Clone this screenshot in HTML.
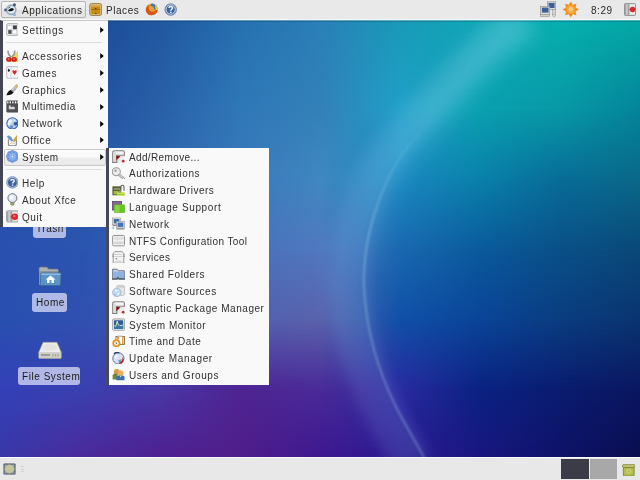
<!DOCTYPE html>
<html><head><meta charset="utf-8">
<style>
*{margin:0;padding:0;box-sizing:border-box}
html,body{-webkit-font-smoothing:antialiased;width:640px;height:480px;overflow:hidden;font-family:"Liberation Sans",sans-serif;font-size:10px;letter-spacing:0.55px;color:#1a1a1a;position:relative}
#desk{position:absolute;left:0;top:20px;width:640px;height:437px;overflow:hidden;background:#2a5aa8}
#top{position:absolute;left:0;top:0;width:640px;height:20px;background:#e9e9e9;border-bottom:1px solid #f4fafc}
#bot{position:absolute;left:0;top:456.5px;width:640px;height:23.5px;background:#e8e8e8;border-top:1.5px solid #fafafa}
.t{will-change:transform;position:absolute;white-space:nowrap;line-height:11px}
.menu{position:absolute;background:#f9f9f9;border-left:3px solid #434553}
.mt{will-change:transform;position:absolute;white-space:nowrap;line-height:11px;color:#303030}
.arr,.ic{position:absolute}
.lbl{position:absolute;background:rgba(200,205,240,0.85);border-radius:3px;white-space:nowrap;line-height:11px}
</style></head><body>
<div id="desk"><div style="position:absolute;left:0;top:0;width:640px;height:437px;background:linear-gradient(to right,#1a4a98 0px,#1c4c98 80px,#2058a0 160px,#2670b0 240px,#2a80b8 320px,#1a9ab8 400px,#10a8b8 480px,#06b0ae 560px,#04a8a5 640px);"></div><div style="position:absolute;left:0;top:0;width:640px;height:437px;background:linear-gradient(to right,#1e4ca0 0px,#2050a0 80px,#2a60a8 160px,#3078b8 240px,#3380b8 320px,#20a0c8 400px,#0aa0b0 480px,#0898a6 560px,#04849a 640px);-webkit-mask-image:linear-gradient(to bottom,transparent 0px,#000 90px);mask-image:linear-gradient(to bottom,transparent 0px,#000 90px);"></div><div style="position:absolute;left:0;top:0;width:640px;height:437px;background:linear-gradient(to right,#2450a8 0px,#2858a8 80px,#3068b0 160px,#3a78bc 240px,#4088c0 320px,#1a88c0 400px,#0a80aa 480px,#086c98 560px,#0a6888 640px);-webkit-mask-image:linear-gradient(to bottom,transparent 90px,#000 160px);mask-image:linear-gradient(to bottom,transparent 90px,#000 160px);"></div><div style="position:absolute;left:0;top:0;width:640px;height:437px;background:linear-gradient(to right,#2a50b0 0px,#2a54b0 80px,#3660b0 160px,#4870b8 240px,#5078c0 320px,#1a68b0 400px,#0a5a9c 480px,#0a5088 560px,#0a4878 640px);-webkit-mask-image:linear-gradient(to bottom,transparent 160px,#000 230px);mask-image:linear-gradient(to bottom,transparent 160px,#000 230px);"></div><div style="position:absolute;left:0;top:0;width:640px;height:437px;background:linear-gradient(to right,#2850b0 0px,#3050b0 80px,#4058b0 160px,#5060b0 240px,#5a62ac 320px,#1050a8 400px,#0a4498 480px,#0a3c80 560px,#0a3470 640px);-webkit-mask-image:linear-gradient(to bottom,transparent 230px,#000 300px);mask-image:linear-gradient(to bottom,transparent 230px,#000 300px);"></div><div style="position:absolute;left:0;top:0;width:640px;height:437px;background:linear-gradient(to right,#3440b8 0px,#3a40b0 80px,#4838a6 160px,#4e2492 240px,#4a2a98 320px,#2a2aa0 400px,#0a2282 480px,#0a1c70 560px,#0a1660 640px);-webkit-mask-image:linear-gradient(to bottom,transparent 300px,#000 370px);mask-image:linear-gradient(to bottom,transparent 300px,#000 370px);"></div><div style="position:absolute;left:0;top:0;width:640px;height:437px;background:linear-gradient(to right,#3838a8 0px,#4a2a9c 80px,#4e2090 160px,#501e8a 240px,#3e1890 320px,#2a1a90 400px,#1a1680 480px,#0e1268 560px,#0a0e50 640px);-webkit-mask-image:linear-gradient(to bottom,transparent 370px,#000 437px);mask-image:linear-gradient(to bottom,transparent 370px,#000 437px);"></div><svg width="640" height="437" style="position:absolute;left:0;top:0"><defs><filter id="g1" x="-50%" y="-50%" width="200%" height="200%"><feGaussianBlur stdDeviation="7"/></filter><filter id="g2" x="-50%" y="-50%" width="200%" height="200%"><feGaussianBlur stdDeviation="1"/></filter><linearGradient id="lg2" gradientUnits="userSpaceOnUse" x1="0" y1="0" x2="0" y2="260"><stop offset="0" stop-color="#a8f0ff" stop-opacity="0.9"/><stop offset="1" stop-color="#a8f0ff" stop-opacity="0"/></linearGradient><linearGradient id="lg" gradientUnits="userSpaceOnUse" x1="0" y1="90" x2="0" y2="210"><stop offset="0" stop-color="#c0e8ff" stop-opacity="0"/><stop offset="1" stop-color="#c0e8ff" stop-opacity="1"/></linearGradient></defs><path d="M530 0 C480 40 440 90 405 130 C380 165 362 220 364 267 C366 310 378 350 395 385 C405 405 415 420 428 445" stroke="url(#lg2)" stroke-opacity="0.16" stroke-width="40" fill="none" filter="url(#g1)"/><path d="M512 0 C462 40 422 90 387 130 C362 165 344 220 346 267 C348 310 360 350 377 385 C387 405 397 420 410 445" stroke="#b0d8ff" stroke-opacity="0.13" stroke-width="34" fill="none" filter="url(#g1)"/><path d="M530 0 C480 40 440 90 405 130 C380 165 362 220 364 267 C366 310 378 350 395 385 C405 405 415 420 428 445" stroke="#a0d0ff" stroke-opacity="0.10" stroke-width="10" fill="none" filter="url(#g1)"/><path d="M530 0 C480 40 440 90 405 130 C380 165 362 220 364 267 C366 310 378 350 395 385 C405 405 415 420 428 445" stroke="url(#lg)" stroke-opacity="0.28" stroke-width="2.2" fill="none" filter="url(#g2)"/></svg><div style="position:absolute;left:0;top:0;width:640px;height:1px;background:rgba(150,190,205,0.55)"></div><div style="position:absolute;left:0;top:1px;width:640px;height:1px;background:rgba(20,40,60,0.22)"></div></div>
<div class="lbl" style="left:33px;top:219px;width:33px;height:18.5px"></div>
<div class="t" style="left:36px;top:223px">Trash</div>
<svg class="ic" style="left:37.5px;top:265.5px" width="24" height="21" viewBox="0 0 24 21">
  <path d="M1 2.5 C1 1.6 1.6 1 2.5 1 L9 1 L10.5 3 L19 3 C19.8 3 20.5 3.6 20.5 4.5 L20.5 7 L1 7 Z" fill="#a8b0b8" stroke="#6a7078" stroke-width="0.8"/>
  <rect x="1" y="5" width="19" height="14" fill="#8a929a"/>
  <path d="M3 7 L23 7 L22.3 19.5 L2.3 19.5 Z" fill="#5c94c8" stroke="#3f6a98" stroke-width="0.8"/>
  <path d="M3.3 7.5 L22.5 7.5 L22.4 9 L3.2 9 Z" fill="#8cbce6"/>
  <path d="M12.5 9.5 L17.5 13.5 L16 13.5 L16 17 L9 17 L9 13.5 L7.5 13.5 Z" fill="#ffffff"/>
  <rect x="11.5" y="14" width="2" height="3" fill="#5c94c8"/>
</svg>
<div class="lbl" style="left:32px;top:293px;width:35px;height:18.5px"></div>
<div class="t" style="left:36px;top:297px">Home</div>
<svg class="ic" style="left:37.5px;top:340.5px" width="24" height="18.5" viewBox="0 0 24 18">
  <path d="M5 1 L19 1 L23.3 11 L23.3 16 C23.3 16.8 22.8 17.3 22 17.3 L2 17.3 C1.2 17.3 0.7 16.8 0.7 16 L0.7 11 Z" fill="#d8d8d0" stroke="#8a8a84" stroke-width="0.8"/>
  <path d="M5.5 1.6 L18.5 1.6 L22.6 10.8 L1.4 10.8 Z" fill="#ececea"/>
  <ellipse cx="12" cy="6" rx="7" ry="3.6" fill="#e2e2de"/>
  <rect x="0.9" y="11" width="22.2" height="6" fill="#cfcfc8"/>
  <rect x="3" y="12.8" width="9" height="1.8" fill="#9a9a94"/>
  <rect x="14.5" y="12.5" width="1.2" height="3" fill="#a8a8a2"/><rect x="17" y="12.5" width="1.2" height="3" fill="#a8a8a2"/><rect x="19.5" y="12.5" width="1.2" height="3" fill="#a8a8a2"/>
</svg>
<div class="lbl" style="left:18px;top:366.5px;width:62px;height:18.5px"></div>
<div class="t" style="left:21.5px;top:371px">File System</div>
<div id="top">
  <div style="position:absolute;left:1px;top:1.3px;width:84.6px;height:17px;border:1px solid #b4b4b4;border-radius:2px;background:linear-gradient(#f6f6f6 0%,#ececec 50%,#e0e0e0 51%,#e6e6e6 100%)"></div>
  <svg class="ic" style="left:3.8px;top:2.8px" width="13.6" height="13.6" viewBox="0 0 16 16">
    <circle cx="8.5" cy="8" r="5.4" fill="#e4ecf4" stroke="#98aec6" stroke-width="2"/>
    <circle cx="1.8" cy="8.2" r="1.7" fill="#4a6282"/><circle cx="12.3" cy="2.2" r="1.8" fill="#3e5878"/><circle cx="12.3" cy="13.8" r="1.8" fill="#9ab4d0"/>
    <path d="M4.8 9.2 C6.5 10.3 9.5 10 11.6 7.8 C11.4 6.2 9.2 5.8 7.2 6.8 L5.6 8 Z" fill="#0c0c0c"/>
    <path d="M5 6 L7.5 4.5" stroke="#2a3a50" stroke-width="1"/>
  </svg>
  <div class="t" style="left:22px;top:5px;color:#2a2a2a">Applications</div>
  <svg class="ic" style="left:89px;top:2.8px" width="13.4" height="13" viewBox="0 0 16 16">
    <rect x="0.7" y="0.7" width="14.6" height="14.6" rx="2.2" fill="#dcc47a" stroke="#8a7848" stroke-width="1.1"/>
    <rect x="2.4" y="3" width="11.2" height="10.6" fill="#c98c18"/>
    <rect x="2.4" y="3" width="11.2" height="1.4" fill="#e0b050"/>
    <rect x="2.4" y="7.6" width="11.2" height="1.1" fill="#a06a10"/>
    <rect x="7" y="6.2" width="2" height="1.4" fill="#5a3a08"/><rect x="7" y="12.2" width="2" height="1.2" fill="#5a3a08"/>
  </svg>
  <div class="t" style="left:105.5px;top:5px;color:#2a2a2a">Places</div>
  <svg class="ic" style="left:144.5px;top:2.8px" width="13.4" height="12.8" viewBox="0 0 16 16">
    <circle cx="8" cy="8" r="7.4" fill="#e8a030"/>
    <path d="M8 0.6 A7.4 7.4 0 0 1 15.4 8 L11 8 C11 5 9 3.5 6 4 Z" fill="#3a78b8"/>
    <path d="M15.4 8 A7.4 7.4 0 0 1 8 15.4 C4 15.4 0.6 12 0.6 8 C1 5 3 3 5 2.6 C3.5 5 4 8 6 10 C8 11.5 11 11 12.5 9 Z" fill="#d8561a"/>
    <path d="M12 2.5 C14.5 4 15.5 6.5 15.2 9 L13 8.5 Z" fill="#f0d050"/>
  </svg>
  <svg class="ic" style="left:163.5px;top:2.8px" width="13.4" height="13" viewBox="0 0 16 16">
    <circle cx="8" cy="8" r="7.2" fill="#7493c0" stroke="#5a78a8" stroke-width="0.8"/>
    <circle cx="8" cy="8" r="5.6" fill="#3c64a2" stroke="#dfe7f2" stroke-width="0.9"/>
    <path d="M5.9 6 C5.9 3.8 10.3 3.6 10.3 6 C10.3 7.6 8.2 7.8 8.2 9.5" stroke="#f2f6fb" stroke-width="1.8" fill="none"/>
    <rect x="7.3" y="10.6" width="1.8" height="1.7" fill="#f2f6fb"/>
  </svg>
  <svg class="ic" style="left:539.5px;top:1px" width="16.5" height="16.5" viewBox="0 0 20 20">
    <rect x="9" y="1" width="10" height="9" fill="#e8e8e8" stroke="#8a8a8a" stroke-width="0.8"/>
    <rect x="10.3" y="2.3" width="7.4" height="6.2" fill="#3e5e98"/>
    <rect x="15" y="10.5" width="4" height="7" fill="#d8d8d8" stroke="#8a8a8a" stroke-width="0.6"/>
    <circle cx="17" cy="17.5" r="1.6" fill="#e8e8e8" stroke="#8a8a8a" stroke-width="0.6"/>
    <rect x="0.8" y="6.5" width="11" height="9.5" fill="#e8e8e8" stroke="#8a8a8a" stroke-width="0.8"/>
    <rect x="2.2" y="7.9" width="8.2" height="6.2" fill="#3e5e98"/>
    <rect x="0.8" y="16.5" width="11" height="2.5" fill="#d0d0d0" stroke="#8a8a8a" stroke-width="0.6"/>
  </svg>
  <svg class="ic" style="left:561.5px;top:1.2px" width="17.5" height="17" viewBox="0 0 20 20">
    <path d="M10 0.5 L12.3 4.4 L16.7 3.3 L15.6 7.7 L19.5 10 L15.6 12.3 L16.7 16.7 L12.3 15.6 L10 19.5 L7.7 15.6 L3.3 16.7 L4.4 12.3 L0.5 10 L4.4 7.7 L3.3 3.3 L7.7 4.4 Z" fill="#f08c1c"/>
    <circle cx="10" cy="10" r="5.2" fill="#f7a83a"/>
    <circle cx="10" cy="9.6" r="2.6" fill="#ffd08a"/>
  </svg>
  <div class="t" style="left:591px;top:5px;color:#2a2a2a">8:29</div>
  <svg class="ic" style="left:623.8px;top:3px" width="12" height="13" viewBox="0 0 15 16">
    <rect x="0.6" y="0.6" width="13.8" height="14.8" rx="1" fill="#e8e8e8" stroke="#7a7a7a" stroke-width="1"/>
    <rect x="1.2" y="1.2" width="5.6" height="13.6" fill="#a0a0a0"/>
    <rect x="2.4" y="1.2" width="2.4" height="13.6" fill="#c8c8c8"/>
    <circle cx="10.8" cy="8" r="3.4" fill="#e0242a"/>
    <path d="M6.5 8 L10 5 L10 11 Z" fill="#e0242a"/>
  </svg>
</div>
<div id="bot">
  <svg class="ic" style="left:3px;top:5.8px" width="13" height="12" viewBox="0 0 16 15">
    <rect x="0.5" y="0.5" width="15" height="14" rx="1.2" fill="#3e4c62"/>
    <path d="M1.5 1.5 L5 1.5 L1.5 5 Z M14.5 1.5 L11 1.5 L14.5 5 Z M1.5 13.5 L5 13.5 L1.5 10 Z M14.5 13.5 L11 13.5 L14.5 10 Z" fill="#8a9cb8"/>
    <ellipse cx="8" cy="7.5" rx="6.6" ry="6" fill="#b4b48c"/>
    <ellipse cx="8" cy="7.3" rx="5.4" ry="4.8" fill="#c4c4a0"/>
  </svg>
  <div style="position:absolute;left:21px;top:8.2px;width:2.8px;height:1px;background:#d0d0d0"></div>
  <div style="position:absolute;left:21px;top:11px;width:2.8px;height:1px;background:#d0d0d0"></div>
  <div style="position:absolute;left:21px;top:13.5px;width:2.8px;height:1px;background:#d0d0d0"></div>
  <div style="position:absolute;left:561.3px;top:1.4px;width:27.4px;height:20.4px;background:#3c3c48"></div>
  <div style="position:absolute;left:590px;top:1.4px;width:26.8px;height:20.4px;background:#a8a8a8"></div>
  <svg class="ic" style="left:621.5px;top:6px" width="13.5" height="12.5" viewBox="0 0 16 15">
    <rect x="1.5" y="3.5" width="13" height="11" rx="1.2" fill="#b4bc4c" stroke="#707a28" stroke-width="0.9"/>
    <rect x="0.6" y="0.8" width="14.8" height="3.2" rx="1" fill="#c8cc80" stroke="#707a28" stroke-width="0.9"/>
    <circle cx="8" cy="9" r="2.4" fill="none" stroke="#d8e090" stroke-width="1"/>
  </svg>
</div>
<div class="menu" style="left:0px;top:20px;width:107.5px;height:206.6px;border-top:1px solid #c8c8c8">
  <div style="position:absolute;left:2.5px;top:21px;width:96px;height:1px;background:#dedede"></div>
  <div style="position:absolute;left:1px;top:128px;width:101.5px;height:16.5px;border:1px solid #c8c8c8;border-radius:2px;background:linear-gradient(#fdfdfd 0%,#f9f9f9 47%,#ededed 53%,#e9e9e9 100%)"></div>
  <div style="position:absolute;left:2.5px;top:148px;width:96px;height:1px;background:#dedede"></div>
</div>
<div class="menu" style="left:106px;top:147.5px;width:163px;height:237.6px;border-left:3.5px solid #474957"></div>
<div class="mt" style="left:21.6px;top:24.7px;letter-spacing:0.72px;">Settings</div>
<svg class="arr" style="left:99.5px;top:27.0px" width="4" height="6" viewBox="0 0 4 6"><path d="M0.2 0L3.8 3L0.2 6z" fill="#000"/></svg>
<svg class="ic" style="left:5.5px;top:23.2px" width="12.8" height="12.8" viewBox="0 0 16 16">
<rect x="0.8" y="0.8" width="14.6" height="14.6" rx="2.2" fill="#f6f6f6" stroke="#b9b9b9" stroke-width="1.4"/>
<rect x="2.2" y="3" width="5.4" height="5" fill="#fff" stroke="#bdbdbd" stroke-width="0.8"/>
<rect x="8.8" y="3" width="4.8" height="5" fill="#3d4444"/>
<rect x="2.8" y="8.8" width="4.2" height="4.8" fill="#46544e"/>
<rect x="8.4" y="8.6" width="5.2" height="5" fill="#fff" stroke="#bdbdbd" stroke-width="0.8"/>
</svg>
<div class="mt" style="left:21.6px;top:51.0px;">Accessories</div>
<svg class="arr" style="left:99.5px;top:53.3px" width="4" height="6" viewBox="0 0 4 6"><path d="M0.2 0L3.8 3L0.2 6z" fill="#000"/></svg>
<svg class="ic" style="left:5.5px;top:49.5px" width="12.8" height="12.8" viewBox="0 0 16 16">
<path d="M15.4 0.8 L15.9 15.9 L3.4 15.9 Z" fill="#f2d660" stroke="#d4b040" stroke-width="0.5"/>
<path d="M3 0.8 C2 3 3 6 6.5 9 M10.5 0.8 C11.5 3 10.5 6 7 9" stroke="#9c9c9c" stroke-width="2.2" fill="none"/>
<ellipse cx="3.6" cy="11.8" rx="3.4" ry="2.9" fill="#cc2218"/>
<ellipse cx="10.2" cy="11.8" rx="3.4" ry="2.9" fill="#cc2218"/>
<ellipse cx="3.4" cy="11.4" rx="1.3" ry="1" fill="#f47a60"/>
<ellipse cx="10.2" cy="11.4" rx="1.3" ry="1" fill="#f47a60"/>
</svg>
<div class="mt" style="left:21.6px;top:67.8px;">Games</div>
<svg class="arr" style="left:99.5px;top:70.1px" width="4" height="6" viewBox="0 0 4 6"><path d="M0.2 0L3.8 3L0.2 6z" fill="#000"/></svg>
<svg class="ic" style="left:5.5px;top:66.3px" width="12.8" height="12.8" viewBox="0 0 16 16">
<rect x="0.8" y="0.8" width="14.6" height="14.6" rx="2" fill="#f8f8f8" stroke="#c2c2c2" stroke-width="1.3"/>
<rect x="5.8" y="1.4" width="0.9" height="13.5" fill="#c8c8c8"/>
<path d="M3.5 3 L5 5.5 L3.5 7.5 L2 5.5 Z" fill="#111"/>
<path d="M8 6.5 C8 5 10 5 10.7 6.2 C11.4 5 13.4 5 13.4 6.5 C13.4 8.5 11 10 10.7 11.5 C10.4 10 8 8.5 8 6.5 Z" fill="#dd2424"/>
</svg>
<div class="mt" style="left:21.6px;top:84.6px;">Graphics</div>
<svg class="arr" style="left:99.5px;top:86.9px" width="4" height="6" viewBox="0 0 4 6"><path d="M0.2 0L3.8 3L0.2 6z" fill="#000"/></svg>
<svg class="ic" style="left:5.5px;top:83.1px" width="12.8" height="12.8" viewBox="0 0 16 16">
<path d="M0.6 15.2 C1.5 12 3.5 9.5 6.5 8.5 L9.5 11.5 C8 14 4.5 15.5 0.6 15.2 Z" fill="#111"/>
<path d="M6 8.5 L10.5 4.5 L13.2 7.2 L9.5 11.8 Z" fill="#b0b0b0"/>
<path d="M7.2 9 L11 5.6" stroke="#e8e8e8" stroke-width="0.8"/>
<path d="M10.3 4.3 L12.5 1.8 C13.5 1.2 15 2.5 15.4 3.6 L13.3 7.3 Z" fill="#d8ae78"/>
</svg>
<div class="mt" style="left:21.6px;top:101.4px;">Multimedia</div>
<svg class="arr" style="left:99.5px;top:103.7px" width="4" height="6" viewBox="0 0 4 6"><path d="M0.2 0L3.8 3L0.2 6z" fill="#000"/></svg>
<svg class="ic" style="left:5.5px;top:99.9px" width="12.8" height="12.8" viewBox="0 0 16 16">
<rect x="0.5" y="0.7" width="15.2" height="15" rx="1.5" fill="#454545"/>
<rect x="1.5" y="1.7" width="1.6" height="2.6" fill="#fff"/><rect x="4.6" y="1.7" width="1.6" height="2.6" fill="#fff"/><rect x="7.8" y="1.7" width="1.6" height="2.6" fill="#fff"/><rect x="11" y="1.7" width="1.6" height="2.6" fill="#fff"/><rect x="13.5" y="1.7" width="1.2" height="2.6" fill="#fff"/>
<rect x="1.2" y="5.2" width="13.8" height="9.6" fill="#505050"/>
<path d="M3.5 7 L6 7 L6 9 L9 8 L11 9 L11 11.5 L3.5 11.5 Z" fill="#d8d8d8"/>
</svg>
<div class="mt" style="left:21.6px;top:118.2px;">Network</div>
<svg class="arr" style="left:99.5px;top:120.5px" width="4" height="6" viewBox="0 0 4 6"><path d="M0.2 0L3.8 3L0.2 6z" fill="#000"/></svg>
<svg class="ic" style="left:5.5px;top:116.7px" width="12.8" height="12.8" viewBox="0 0 16 16">
<circle cx="8" cy="8" r="7" fill="#b8cde8" stroke="#3d68a8" stroke-width="1.3"/>
<path d="M3 5 C4 3 6 2.8 7 3.6 L8 6 L5.5 8.2 L4.5 11 L2 9 Z" fill="#eef4fb"/>
<path d="M9.5 2.5 L12 3.8 L10.5 6 L9 5.5 Z" fill="#dce8f6"/>
<path d="M10 7 L14 6 L14.8 9.5 L12 11 L9.5 9.5 Z" fill="#2d5a9a"/>
<path d="M5 10.5 L9 11 L8 14 L5.5 13.5 Z" fill="#5b86c0"/>
</svg>
<div class="mt" style="left:21.6px;top:135.0px;">Office</div>
<svg class="arr" style="left:99.5px;top:137.3px" width="4" height="6" viewBox="0 0 4 6"><path d="M0.2 0L3.8 3L0.2 6z" fill="#000"/></svg>
<svg class="ic" style="left:5.5px;top:133.5px" width="12.8" height="12.8" viewBox="0 0 16 16">
<path d="M3 6.5 L3 12.8 C3 14.3 4 14.9 5.5 14.9 L10.5 14.9 C12 14.9 13 14.3 13 12.8 L13 6.5" fill="#f6f6f6" stroke="#8a8a8a" stroke-width="1.4"/>
<path d="M1.2 3 C2.5 1.2 5 1.8 7 4.5 L9 8.5 L7.5 9.5 C5 7.5 2 5.5 1.2 3 Z" fill="#6f95c8"/>
<path d="M13.8 1 L13.6 7.5 L10 10 L8.2 8.6 Z" fill="#c9a348"/>
<path d="M5 12.2 L8 10.8 L11 12.2" stroke="#c8b890" stroke-width="1" fill="none"/>
</svg>
<div class="mt" style="left:21.6px;top:151.8px;">System</div>
<svg class="arr" style="left:99.5px;top:154.1px" width="4" height="6" viewBox="0 0 4 6"><path d="M0.2 0L3.8 3L0.2 6z" fill="#000"/></svg>
<svg class="ic" style="left:5.5px;top:150.3px" width="12.8" height="12.8" viewBox="0 0 16 16">
<circle cx="13.00" cy="8.00" r="2.6" fill="#7aa6e6" stroke="#4a7ac4" stroke-width="0.7"/><circle cx="11.54" cy="11.54" r="2.6" fill="#7aa6e6" stroke="#4a7ac4" stroke-width="0.7"/><circle cx="8.00" cy="13.00" r="2.6" fill="#7aa6e6" stroke="#4a7ac4" stroke-width="0.7"/><circle cx="4.46" cy="11.54" r="2.6" fill="#7aa6e6" stroke="#4a7ac4" stroke-width="0.7"/><circle cx="3.00" cy="8.00" r="2.6" fill="#7aa6e6" stroke="#4a7ac4" stroke-width="0.7"/><circle cx="4.46" cy="4.46" r="2.6" fill="#7aa6e6" stroke="#4a7ac4" stroke-width="0.7"/><circle cx="8.00" cy="3.00" r="2.6" fill="#7aa6e6" stroke="#4a7ac4" stroke-width="0.7"/><circle cx="11.54" cy="4.46" r="2.6" fill="#7aa6e6" stroke="#4a7ac4" stroke-width="0.7"/>
<circle cx="8" cy="8" r="4.6" fill="#7aa6e6"/>
<circle cx="8" cy="8" r="3" fill="none" stroke="#a8c8f4" stroke-width="0.8"/>
<circle cx="8" cy="8" r="1.1" fill="#e6f0ff"/>
</svg>
<div class="mt" style="left:21.6px;top:177.9px;">Help</div>
<svg class="ic" style="left:5.5px;top:176.4px" width="12.8" height="12.8" viewBox="0 0 16 16">
<circle cx="8" cy="8" r="7.3" fill="#a8bcd8" stroke="#6a88b8" stroke-width="0.8"/>
<circle cx="8" cy="8" r="5.6" fill="#3a62a2"/>
<path d="M5.9 6 C5.9 3.8 10.3 3.6 10.3 6 C10.3 7.6 8.2 7.8 8.2 9.5" stroke="#eef3fa" stroke-width="1.8" fill="none"/>
<rect x="7.3" y="10.6" width="1.8" height="1.7" fill="#eef3fa"/>
</svg>
<div class="mt" style="left:21.6px;top:194.7px;">About Xfce</div>
<svg class="ic" style="left:5.5px;top:193.2px" width="12.8" height="12.8" viewBox="0 0 16 16">
<circle cx="8" cy="6.4" r="5.6" fill="#dfe6f2" stroke="#5d6472" stroke-width="1.1"/>
<circle cx="7" cy="5.4" r="3" fill="#f4f8fc"/>
<rect x="5.8" y="11.4" width="4.4" height="3.8" rx="1" fill="#9fa070" stroke="#707250" stroke-width="0.5"/>
</svg>
<div class="mt" style="left:21.6px;top:211.5px;">Quit</div>
<svg class="ic" style="left:5.5px;top:210.0px" width="12.8" height="12.8" viewBox="0 0 16 16">
<rect x="0.7" y="1" width="14.6" height="14" rx="1.5" fill="#e6e6e6" stroke="#8a8a8a" stroke-width="1"/>
<rect x="1.4" y="1.7" width="6.4" height="12.6" fill="#9a9a9a"/>
<rect x="2.8" y="1.7" width="2.8" height="12.6" fill="#cdcdcd"/>
<circle cx="11" cy="8.5" r="4" fill="#e0242a"/>
<path d="M5.5 8.5 L9 5 L9 12 Z" fill="#e0242a"/>
<circle cx="10.4" cy="7.6" r="1.6" fill="#f06a6a"/>
</svg>
<div class="mt" style="left:128.5px;top:151.6px;letter-spacing:0.36px;">Add/Remove...</div>
<svg class="ic" style="left:112px;top:149.9px" width="12.8" height="12.8" viewBox="0 0 16 16">
<rect x="6.5" y="7" width="9" height="8.6" fill="#ebebeb"/>
<path d="M0.9 15.4 L0.9 3.6 Q0.9 0.9 3.6 0.9 L13.6 0.9 Q15.5 0.9 15.5 3 L15.5 6.6 L6 6.6 L6 15.4 Z" fill="#f4f4f4" stroke="#808080" stroke-width="1.4"/>
<rect x="1.8" y="3" width="3.2" height="11.8" fill="#dadada"/>
<path d="M5.4 7.2 L10.8 7.8 L5.4 12.8 Z" fill="#8c1414"/>
<circle cx="14" cy="14" r="1.7" fill="#a83838"/>
</svg>
<div class="mt" style="left:128.5px;top:168.4px;">Authorizations</div>
<svg class="ic" style="left:112px;top:166.7px" width="12.8" height="12.8" viewBox="0 0 16 16">
<circle cx="5.4" cy="6" r="5" fill="#ececec" stroke="#999" stroke-width="1.3"/>
<circle cx="4.4" cy="4.6" r="1.6" fill="#a0a0a0"/>
<path d="M9.2 10 L15 15" stroke="#999" stroke-width="3" stroke-linecap="round"/>
<path d="M9.2 10 L15 15" stroke="#e8e8e8" stroke-width="1.2" stroke-linecap="round"/>
</svg>
<div class="mt" style="left:128.5px;top:185.2px;letter-spacing:0.47px;">Hardware Drivers</div>
<svg class="ic" style="left:112px;top:183.5px" width="12.8" height="12.8" viewBox="0 0 16 16">
<rect x="0.6" y="3" width="10.8" height="11" fill="#3e4a12"/>
<rect x="1.8" y="4.5" width="8.5" height="3.2" fill="#8a9070"/>
<rect x="1.8" y="8.5" width="6" height="4.5" fill="#a8c040"/>
<path d="M11 8.5 L11 3.5 C11 1 15 1 15 3.5 L15 8.5" stroke="#666" stroke-width="1.4" fill="none"/>
<path d="M8 11 C8 8 12.5 8 12.5 11" stroke="#d8d8d8" stroke-width="1.2" fill="none"/>
<rect x="6.2" y="10.5" width="9.6" height="5.4" rx="1" fill="#dceb62" stroke="#b8c030" stroke-width="0.6"/>
<rect x="6.8" y="12.2" width="8.4" height="1.6" fill="#88d048"/>
</svg>
<div class="mt" style="left:128.5px;top:202.0px;letter-spacing:0.63px;">Language Support</div>
<svg class="ic" style="left:112px;top:200.3px" width="12.8" height="12.8" viewBox="0 0 16 16">
<rect x="0.8" y="2" width="11" height="10.5" fill="#86659a" stroke="#4c3157" stroke-width="0.9"/>
<rect x="3" y="6" width="12.8" height="10" rx="0.8" fill="#80d836" stroke="#5aaa1e" stroke-width="0.7"/>
<rect x="9.5" y="6.5" width="5.8" height="9" fill="#6ac228"/>
</svg>
<div class="mt" style="left:128.5px;top:218.8px;">Network</div>
<svg class="ic" style="left:112px;top:217.1px" width="12.8" height="12.8" viewBox="0 0 16 16">
<rect x="0.8" y="1.2" width="10" height="8.5" fill="#e4e4e4" stroke="#9a9a9a" stroke-width="0.8"/>
<rect x="2.2" y="2.5" width="7" height="5.5" fill="#3c6ab0"/>
<rect x="0.8" y="10" width="10" height="1.4" fill="#8e8e8e"/>
<rect x="5.6" y="5.8" width="10" height="8" fill="#e4e4e4" stroke="#9a9a9a" stroke-width="0.8"/>
<rect x="7" y="7" width="7.2" height="5.4" fill="#3f73bf"/>
<rect x="5.6" y="14" width="10" height="1.6" fill="#8a8a8a"/>
<rect x="0.5" y="12" width="2" height="3" fill="#9fbde0"/>
</svg>
<div class="mt" style="left:128.5px;top:235.6px;letter-spacing:0.39px;">NTFS Configuration Tool</div>
<svg class="ic" style="left:112px;top:233.9px" width="12.8" height="12.8" viewBox="0 0 16 16">
<rect x="0.8" y="1.8" width="14.8" height="13" rx="1.4" fill="#f4f4f4" stroke="#909090" stroke-width="1.2"/>
<path d="M2 3 L14.5 3 L14.5 7 C11 8.5 5.5 8.5 2 7 Z" fill="#e2e2e2"/>
<rect x="2" y="9.5" width="12.5" height="3.2" fill="#d6d6d6"/>
</svg>
<div class="mt" style="left:128.5px;top:252.4px;letter-spacing:0.39px;">Services</div>
<svg class="ic" style="left:112px;top:250.7px" width="12.8" height="12.8" viewBox="0 0 16 16">
<path d="M3.5 0.8 L12.5 0.8 L14.8 3 L14.8 15.2 L1.5 15.2 L1.5 3 Z" fill="#f4f4f4" stroke="#8a8a8a" stroke-width="1.1"/>
<rect x="0.5" y="4.5" width="1.4" height="1" fill="#777"/><rect x="0.5" y="6.5" width="1.4" height="1" fill="#777"/>
<rect x="14.5" y="4.5" width="1.4" height="1" fill="#777"/><rect x="14.5" y="6.5" width="1.4" height="1" fill="#777"/>
<rect x="3" y="4" width="10" height="1" fill="#c8c8c8"/><rect x="3" y="6.5" width="10" height="1" fill="#c8c8c8"/>
<path d="M4 9 L7 9 L5.5 11 Z" fill="#777"/>
<rect x="4" y="12.3" width="8" height="0.8" fill="#bdbdbd"/>
</svg>
<div class="mt" style="left:128.5px;top:269.2px;">Shared Folders</div>
<svg class="ic" style="left:112px;top:267.5px" width="12.8" height="12.8" viewBox="0 0 16 16">
<path d="M0.8 1.5 L6.5 1.5 L8 3.4 L15.4 3.4 L15.4 15.2 L0.8 15.2 Z" fill="#c8d4e4" stroke="#505c6c" stroke-width="1"/>
<rect x="1.6" y="4.5" width="13.4" height="8.5" fill="#8fb2dc"/>
<path d="M0.8 13.6 L6 13.6 L7.5 12 L9 13.6 L15.4 13.6" stroke="#3f4a58" stroke-width="1.4" fill="none"/>
</svg>
<div class="mt" style="left:128.5px;top:286.0px;">Software Sources</div>
<svg class="ic" style="left:112px;top:284.3px" width="12.8" height="12.8" viewBox="0 0 16 16">
<path d="M6 3 C6 1 15.5 1 15.5 3 L15.5 13 C15.5 15 6 15 6 13 Z" fill="#e6e6e6" stroke="#a8a8a8" stroke-width="0.8"/>
<ellipse cx="10.7" cy="3" rx="4.8" ry="1.6" fill="#cfcfcf"/>
<circle cx="6" cy="10.5" r="5.3" fill="#c4d8ee" stroke="#8eaad0" stroke-width="0.8"/>
<path d="M3 8 C4 6.5 6 6.5 7 7.5 L5.5 9.5 Z M6 12 L9 11 L8.5 14.5 Z" fill="#f3f7fc"/>
<path d="M2 12 L4.5 13.5 L4 15.5 Z" fill="#8aa8d0"/>
</svg>
<div class="mt" style="left:128.5px;top:302.8px;">Synaptic Package Manager</div>
<svg class="ic" style="left:112px;top:301.1px" width="12.8" height="12.8" viewBox="0 0 16 16">
<rect x="6.5" y="7" width="9" height="8.6" fill="#ebebeb"/>
<path d="M0.9 15.4 L0.9 3.6 Q0.9 0.9 3.6 0.9 L13.6 0.9 Q15.5 0.9 15.5 3 L15.5 6.6 L6 6.6 L6 15.4 Z" fill="#f4f4f4" stroke="#808080" stroke-width="1.4"/>
<rect x="1.8" y="3" width="3.2" height="11.8" fill="#dadada"/>
<path d="M5.4 7.2 L10.8 7.8 L5.4 12.8 Z" fill="#8c1414"/>
<circle cx="14" cy="14" r="1.7" fill="#a83838"/>
</svg>
<div class="mt" style="left:128.5px;top:319.6px;">System Monitor</div>
<svg class="ic" style="left:112px;top:317.9px" width="12.8" height="12.8" viewBox="0 0 16 16">
<rect x="0.8" y="1.2" width="15" height="14.2" rx="1.2" fill="#e8e8e8" stroke="#9c9c9c" stroke-width="1.1"/>
<rect x="2.5" y="2.9" width="11.5" height="10.8" rx="0.8" fill="#2e5c96"/>
<rect x="2.5" y="9.5" width="11.5" height="4.2" fill="#3a78a8"/>
<path d="M3 10 L5 10 L6.5 4 L8 9 L9 8.5 L10 9.5 L13.5 9" stroke="#d8f0d0" stroke-width="1.2" fill="none"/>
</svg>
<div class="mt" style="left:128.5px;top:336.4px;">Time and Date</div>
<svg class="ic" style="left:112px;top:334.7px" width="12.8" height="12.8" viewBox="0 0 16 16">
<rect x="5" y="2" width="10.5" height="10" fill="#fff" stroke="#7a5a20" stroke-width="1"/>
<rect x="6.5" y="2.5" width="2.5" height="3" fill="#d99a40"/>
<rect x="12.5" y="2.5" width="2" height="9" fill="#caa868"/>
<rect x="7" y="0.5" width="6" height="1.8" fill="#c8c8c8"/>
<circle cx="5.5" cy="10.2" r="5" fill="#e8901e"/>
<circle cx="5.5" cy="10.2" r="2.8" fill="#fff6e8"/>
<path d="M4.5 9.5 L6.8 10 L5 11.3 Z" fill="#333"/>
</svg>
<div class="mt" style="left:128.5px;top:353.2px;letter-spacing:0.67px;">Update Manager</div>
<svg class="ic" style="left:112px;top:351.5px" width="12.8" height="12.8" viewBox="0 0 16 16">
<circle cx="8" cy="8" r="7" fill="#d4e2f2" stroke="#5f7088" stroke-width="1.2"/>
<path d="M2.5 2.5 C4 0.5 7 0.3 9 1" stroke="#2c3f66" stroke-width="1.6" fill="none"/>
<path d="M4 4 L7 3.5 L6.5 6.5 L3.5 8 Z" fill="#f6f9fd"/>
<path d="M8 10 L12 9 L11 13 L8.5 13.5 Z" fill="#6e9ac8"/>
<path d="M13 6 C15 9 15 12 12 14.5 L15 14.5 L8 14.5 L11.5 12 C13 10.5 13.5 8 13 6 Z" fill="#b22020"/>
</svg>
<div class="mt" style="left:128.5px;top:370.0px;">Users and Groups</div>
<svg class="ic" style="left:112px;top:368.3px" width="12.8" height="12.8" viewBox="0 0 16 16">
<circle cx="6" cy="5" r="3.8" fill="#d49a50"/>
<path d="M0.8 9.5 C0.8 7.5 3 6.8 5.5 6.8 L7 8 L7 14.5 L0.8 14.5 Z" fill="#6a8a3a"/>
<circle cx="10.8" cy="6.5" r="3.6" fill="#f0ae58"/>
<path d="M5.5 11.5 C5.5 10 7 9.5 9 9.3 L12.5 9.3 C14.5 9.5 15.6 10 15.6 11.5 L15.6 15.4 L5.5 15.4 Z" fill="#3c6fb0"/>
<path d="M9.6 9.5 L10.8 12 L12 9.5 Z" fill="#cfe0f4"/>
</svg>
</body></html>
